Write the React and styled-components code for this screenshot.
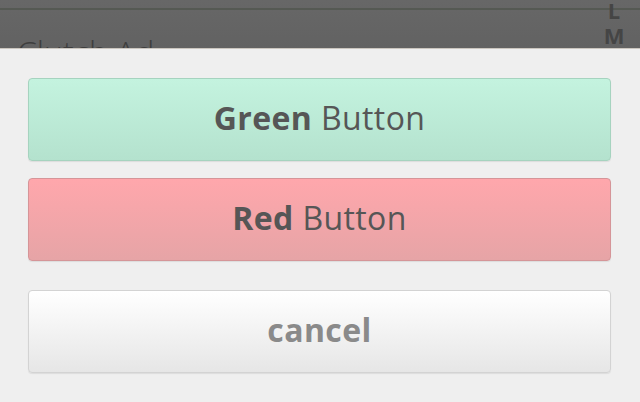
import React from 'react';
import styled, { createGlobalStyle } from 'styled-components';

const GlobalStyle = createGlobalStyle`
  html, body { margin: 0; padding: 0; }
  body {
    width: 640px;
    height: 402px;
    overflow: hidden;
    background: #efefef;
    font-family: "Open Sans", Lato, "Liberation Sans", sans-serif;
  }
`;

// --- dimmed page behind the sheet ---
const Backdrop = styled.div`
  position: relative;
  height: 48px;
  overflow: hidden;
  background: linear-gradient(to bottom, #676767, #626262);
`;

const TopRule = styled.div`
  height: 8px;
  border-bottom: 2px solid #555953;
`;

const ListRow = styled.div`
  padding: 26px 0 0 17px;
  font-size: 32px;
  font-weight: 300;
  color: #3e3e3e;
  line-height: 1;
  white-space: nowrap;
`;

const IndexBar = styled.div`
  position: absolute;
  top: 0;
  right: 16px;
  width: 20px;
  display: flex;
  flex-direction: column;
  align-items: center;
  gap: 5px;
  font-size: 22px;
  font-weight: 700;
  color: #454545;
  line-height: 20px;
`;

// --- action sheet ---
const Sheet = styled.div`
  border-top: 1px solid #cbc6bf;
  background: #efefef;
  padding: 29px 29px 0 28px;
  display: flex;
  flex-direction: column;
`;

const VARIANTS = {
  green: { top: '#c4f3df', bottom: '#b4e2ce', border: '#a6d3bf', color: '#565656' },
  red: { top: '#ffa7ac', bottom: '#e6a4a6', border: '#d59598', color: '#565656' },
  cancel: { top: '#ffffff', bottom: '#e6e6e6', border: '#d3d3d3', color: '#8a8a8a' },
};

const SheetButton = styled.button`
  height: 83px;
  width: 583px;
  margin-bottom: ${(p) => p.$gap}px;
  border: 1px solid ${(p) => VARIANTS[p.$variant].border};
  border-radius: 4px;
  background: linear-gradient(
    to bottom,
    ${(p) => VARIANTS[p.$variant].top},
    ${(p) => VARIANTS[p.$variant].bottom}
  );
  box-shadow: 0 1px 1px rgba(0, 0, 0, 0.08);
  color: ${(p) => VARIANTS[p.$variant].color};
  font-family: inherit;
  font-size: 32px;
  letter-spacing: 0.4px;
  font-weight: ${(p) => (p.$variant === 'cancel' ? 700 : 400)};
  padding: 0 0 5px;
  cursor: pointer;

  b { font-weight: 700; }
`;

const App = () => (
  <>
    <GlobalStyle />
    <Backdrop>
      <TopRule />
      <ListRow>Clutch Ad</ListRow>
      <IndexBar>
        <span>L</span>
        <span>M</span>
      </IndexBar>
    </Backdrop>
    <Sheet>
      <SheetButton $variant="green" $gap={17}>
        <b>Green</b> Button
      </SheetButton>
      <SheetButton $variant="red" $gap={29}>
        <b>Red</b> Button
      </SheetButton>
      <SheetButton $variant="cancel" $gap={0}>
        cancel
      </SheetButton>
    </Sheet>
  </>
);

export default App;
